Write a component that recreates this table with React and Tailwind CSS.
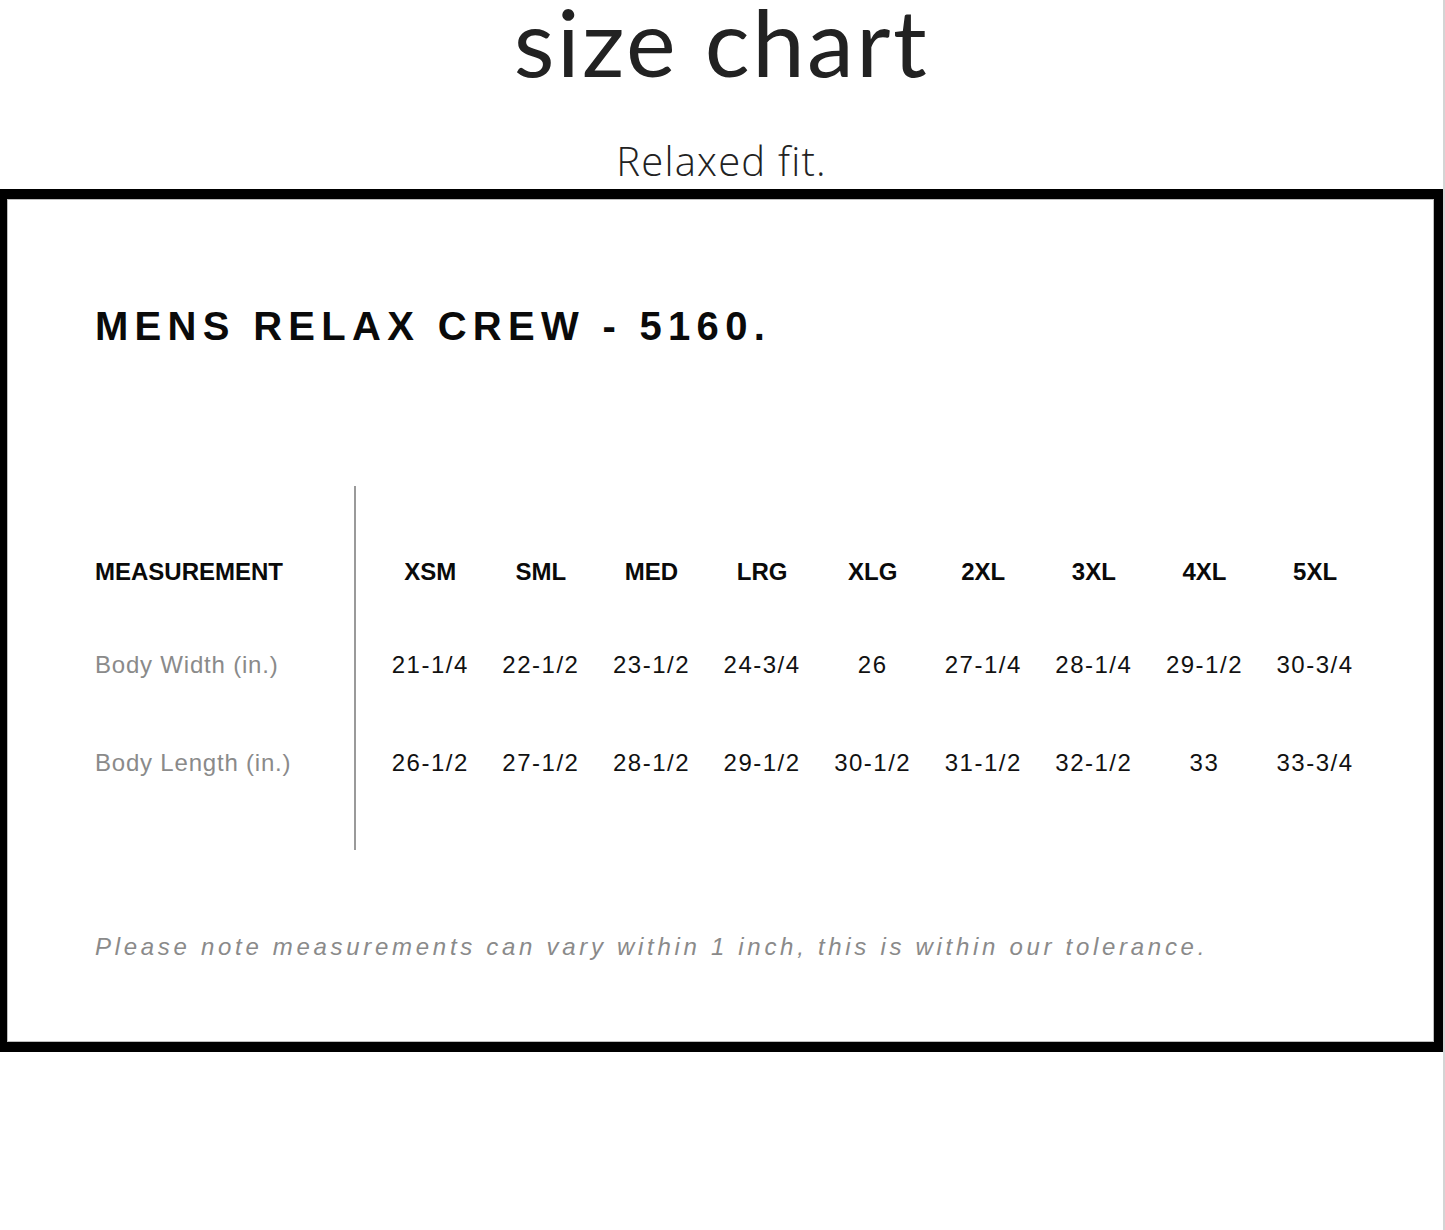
const sizes = ["XSM", "SML", "MED", "LRG", "XLG", "2XL", "3XL", "4XL", "5XL"];

const rows = [
  {
    label: "Body Width (in.)",
    h: "h-[92px]",
    values: ["21-1/4", "22-1/2", "23-1/2", "24-3/4", "26", "27-1/4", "28-1/4", "29-1/2", "30-3/4"],
  },
  {
    label: "Body Length (in.)",
    h: "h-[104px]",
    values: ["26-1/2", "27-1/2", "28-1/2", "29-1/2", "30-1/2", "31-1/2", "32-1/2", "33", "33-3/4"],
  },
];

export default function App() {
  return (
    <div className="w-[1445px] h-[1230px] bg-white overflow-hidden border-r-2 border-[#d4d4d4] font-['Liberation_Sans',Arial,sans-serif]">
      {/* page title */}
      <div className="h-[189px] flex flex-col items-center">
        <h1 className="mt-[6px] text-[94px] leading-[70px] text-[#222222] font-['Lato',sans-serif] tracking-[2.5px]">
          size chart
        </h1>
        <p className="mt-[63px] text-[40px] leading-[44px] font-light text-[#222222] font-['Open_Sans',sans-serif] tracking-[1.2px]">
          Relaxed fit.
        </p>
      </div>

      {/* chart frame */}
      <div className="w-[1443px] h-[863px] border-black border-t-[10px] border-b-[10px] border-l-[7px] border-r-[9px]">
        <div className="h-full border border-[#bdbdbd] pl-[87px] pt-[101px]">
          <h2 className="text-[40px] leading-[50px] font-bold tracking-[6.3px] text-[#0a0a0a]">
            MENS RELAX CREW - 5160.
          </h2>

          <div className="mt-[135px] flex">
            <div className="w-[259px] flex flex-col">
              <div className="h-[39px]" />
              <div className="h-[94px] flex items-center text-[24px] font-bold text-[#0a0a0a]">MEASUREMENT</div>
              {rows.map((r) => (
                <div key={r.label} className={`${r.h} flex items-center text-[24px] text-[#8a8a8a] tracking-[0.8px]`}>
                  {r.label}
                </div>
              ))}
              <div className="h-[35px]" />
            </div>
            <div className="w-[2px] bg-[#9a9a9a] h-[364px]" />
            <div className="ml-[19px] flex flex-col">
              <div className="h-[39px]" />
              <div className="h-[94px] flex items-center">
                {sizes.map((s) => (
                  <div key={s} className="w-[110.6px] text-center text-[24px] font-bold text-[#0a0a0a]">
                    {s}
                  </div>
                ))}
              </div>
              {rows.map((r) => (
                <div key={r.label} className={`${r.h} flex items-center`}>
                  {r.values.map((v, i) => (
                    <div key={i} className="w-[110.6px] text-center text-[24px] text-[#111111] tracking-[1.5px]">
                      {v}
                    </div>
                  ))}
                </div>
              ))}
            </div>
          </div>

          <p className="mt-[83px] text-[24px] leading-[28px] italic text-[#8a8a8a] tracking-[3.7px]">
            Please note measurements can vary within 1 inch, this is within our tolerance.
          </p>
        </div>
      </div>
    </div>
  );
}
